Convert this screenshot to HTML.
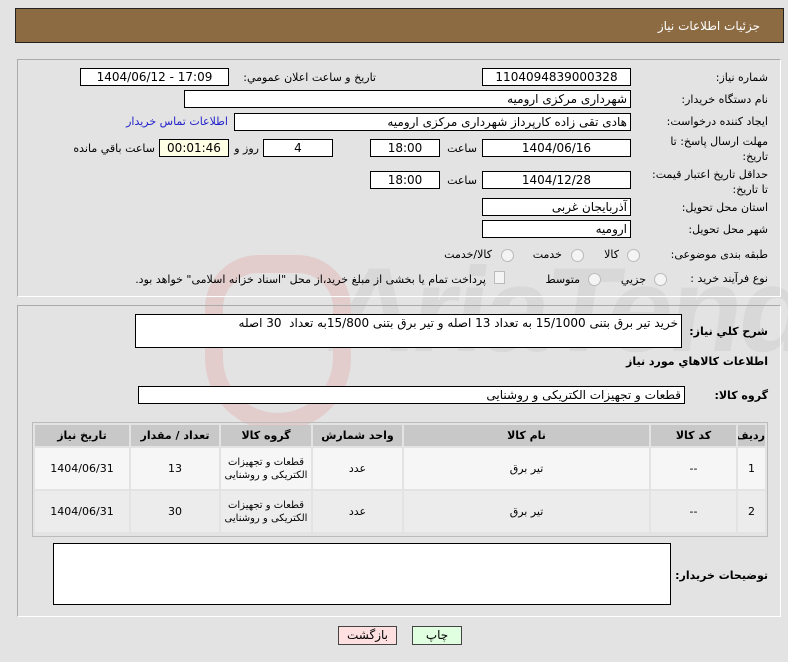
<!DOCTYPE html>
<html><head><meta charset="utf-8"><style>
body{margin:0;width:788px;height:662px;background:#e3e3e3;font-family:"DejaVu Sans",sans-serif;font-size:11px;color:#000;position:relative;overflow:hidden}
.a{position:absolute}
.box{position:absolute;background:#fff;border:1px solid #000;box-sizing:border-box;font-size:12px;line-height:16px;white-space:nowrap;overflow:hidden}
.c{text-align:center}
.r{direction:rtl;text-align:right;padding-right:3px}
.l{position:absolute;direction:rtl;white-space:nowrap;font-size:11px;line-height:16px}
.rad{position:absolute;width:11px;height:11px;border:1px solid #bbb;border-radius:50%;background:#f4f4f4}
table{border-collapse:separate;border-spacing:2px;table-layout:fixed}
td{text-align:center;font-size:11px;padding:0;overflow:hidden}
</style></head><body>
<div class="a" style="left:330px;top:240px;font-size:120px;font-weight:bold;color:#d8d8d8;font-family:'Liberation Sans Narrow','Liberation Sans',sans-serif;letter-spacing:-4px;transform:skewX(-8deg);line-height:140px">AriaTender.neT</div>
<div class="a" style="left:205px;top:255px;width:110px;height:140px;border:18px solid #e3cccc;border-radius:55px 55px 75px 75px"></div>

<div class="a" style="left:15px;top:8px;width:769px;height:35px;background:#8c6b42;border:1px solid #222;box-sizing:border-box"></div>
<div class="l" style="right:28px;top:18px;color:#fff;font-size:12px">جزئیات اطلاعات نیاز</div>

<div class="a" style="left:17px;top:59px;width:764px;height:238px;border:1px solid #aaa;border-right-color:#fff;border-bottom-color:#fff;box-sizing:border-box"></div>
<div class="a" style="left:17px;top:305px;width:764px;height:312px;border:1px solid #aaa;border-right-color:#fff;border-bottom-color:#fff;box-sizing:border-box"></div>

<div class="l" style="right:20px;top:70px">شماره نیاز:</div>
<div class="box c" style="left:482px;top:68px;width:149px;height:18px">1104094839000328</div>
<div class="l" style="right:412px;top:70px">تاریخ و ساعت اعلان عمومي:</div>
<div class="box c" style="left:80px;top:68px;width:149px;height:18px">1404/06/12 - 17:09</div>

<div class="l" style="right:20px;top:92px">نام دستگاه خریدار:</div>
<div class="box r" style="left:184px;top:90px;width:447px;height:18px">شهرداری مرکزی ارومیه</div>

<div class="l" style="right:20px;top:114px">ایجاد کننده درخواست:</div>
<div class="box r" style="left:234px;top:113px;width:397px;height:18px">هادی تقی زاده کارپرداز شهرداری مرکزی ارومیه</div>
<div class="l" style="right:560px;top:114px;color:#2222cc">اطلاعات تماس خریدار</div>

<div class="l" style="right:20px;top:134px;line-height:15px">مهلت ارسال پاسخ: تا<br>تاریخ:</div>
<div class="box c" style="left:482px;top:139px;width:149px;height:18px">1404/06/16</div>
<div class="l" style="right:311px;top:141px">ساعت</div>
<div class="box c" style="left:370px;top:139px;width:70px;height:18px">18:00</div>
<div class="box c" style="left:263px;top:139px;width:70px;height:18px">4</div>
<div class="l" style="right:529px;top:141px">روز و</div>
<div class="box c" style="left:159px;top:139px;width:70px;height:18px;background:#ffffe6">00:01:46</div>
<div class="l" style="right:633px;top:141px">ساعت باقي مانده</div>

<div class="l" style="right:20px;top:167px;line-height:15px">حداقل تاریخ اعتبار قیمت:<br>تا تاریخ:</div>
<div class="box c" style="left:482px;top:171px;width:149px;height:18px">1404/12/28</div>
<div class="l" style="right:311px;top:173px">ساعت</div>
<div class="box c" style="left:370px;top:171px;width:70px;height:18px">18:00</div>

<div class="l" style="right:20px;top:200px">استان محل تحویل:</div>
<div class="box r" style="left:482px;top:198px;width:149px;height:18px">آذربایجان غربی</div>
<div class="l" style="right:20px;top:222px">شهر محل تحویل:</div>
<div class="box r" style="left:482px;top:220px;width:149px;height:18px">ارومیه</div>

<div class="l" style="right:20px;top:247px">طبقه بندی موضوعی:</div>
<div class="rad" style="left:627px;top:249px"></div><div class="l" style="right:169px;top:247px">کالا</div>
<div class="rad" style="left:571px;top:249px"></div><div class="l" style="right:226px;top:247px">خدمت</div>
<div class="rad" style="left:501px;top:249px"></div><div class="l" style="right:296px;top:247px">کالا/خدمت</div>

<div class="l" style="right:20px;top:271px">نوع فرآیند خرید :</div>
<div class="rad" style="left:654px;top:273px"></div><div class="l" style="right:142px;top:272px">جزیي</div>
<div class="rad" style="left:588px;top:273px"></div><div class="l" style="right:208px;top:272px">متوسط</div>
<div class="a" style="left:494px;top:271px;width:9px;height:11px;border:1px solid #bbb;background:#f4f4f4"></div>
<div class="l" style="right:302px;top:272px">پرداخت تمام یا بخشی از مبلغ خرید،از محل "اسناد خزانه اسلامی" خواهد بود.</div>

<div class="l" style="right:20px;top:324px;font-weight:bold">شرح كلي نياز:</div>
<div class="box r" style="left:135px;top:314px;width:547px;height:34px;line-height:17px">خرید تیر برق بتنی 15/1000 به تعداد 13 اصله و تیر برق بتنی 15/800به تعداد&nbsp; 30 اصله</div>
<div class="l" style="right:20px;top:354px;font-weight:bold">اطلاعات كالاهاي مورد نياز</div>
<div class="l" style="right:20px;top:388px;font-weight:bold">گروه کالا:</div>
<div class="box r" style="left:138px;top:386px;width:547px;height:18px">قطعات و تجهیزات الکتریکی و روشنایی</div>

<div class="a" style="left:32px;top:422px;width:736px;height:115px;border:1px solid #bbb;box-sizing:border-box;direction:rtl;overflow:hidden">
<table style="width:100%;margin:0">
<tr style="background:#c8c8c8;font-weight:bold"><td style="width:27px;height:21px">ردیف</td><td style="width:85px">کد کالا</td><td style="width:245px">نام کالا</td><td style="width:89px">واحد شمارش</td><td style="width:90px">گروه کالا</td><td style="width:88px">تعداد / مقدار</td><td>تاریخ نیاز</td></tr>
<tr style="background:#f6f6f6"><td style="height:41px">1</td><td>--</td><td>تیر برق</td><td>عدد</td><td style="line-height:13px;font-size:10px">قطعات و تجهیزات الکتریکی و روشنایی</td><td>13</td><td>1404/06/31</td></tr>
<tr style="background:#ececec"><td style="height:41px">2</td><td>--</td><td>تیر برق</td><td>عدد</td><td style="line-height:13px;font-size:10px">قطعات و تجهیزات الکتریکی و روشنایی</td><td>30</td><td>1404/06/31</td></tr>
</table></div>

<div class="l" style="right:20px;top:568px;font-weight:bold">توضیحات خریدار:</div>
<div class="box" style="left:53px;top:543px;width:618px;height:62px"></div>

<div class="box c" style="left:338px;top:626px;width:59px;height:19px;background:#ffe0e0;border-color:#444">بازگشت</div>
<div class="box c" style="left:412px;top:626px;width:50px;height:19px;background:#e0ffe0;border-color:#444">چاپ</div>
</body></html>
